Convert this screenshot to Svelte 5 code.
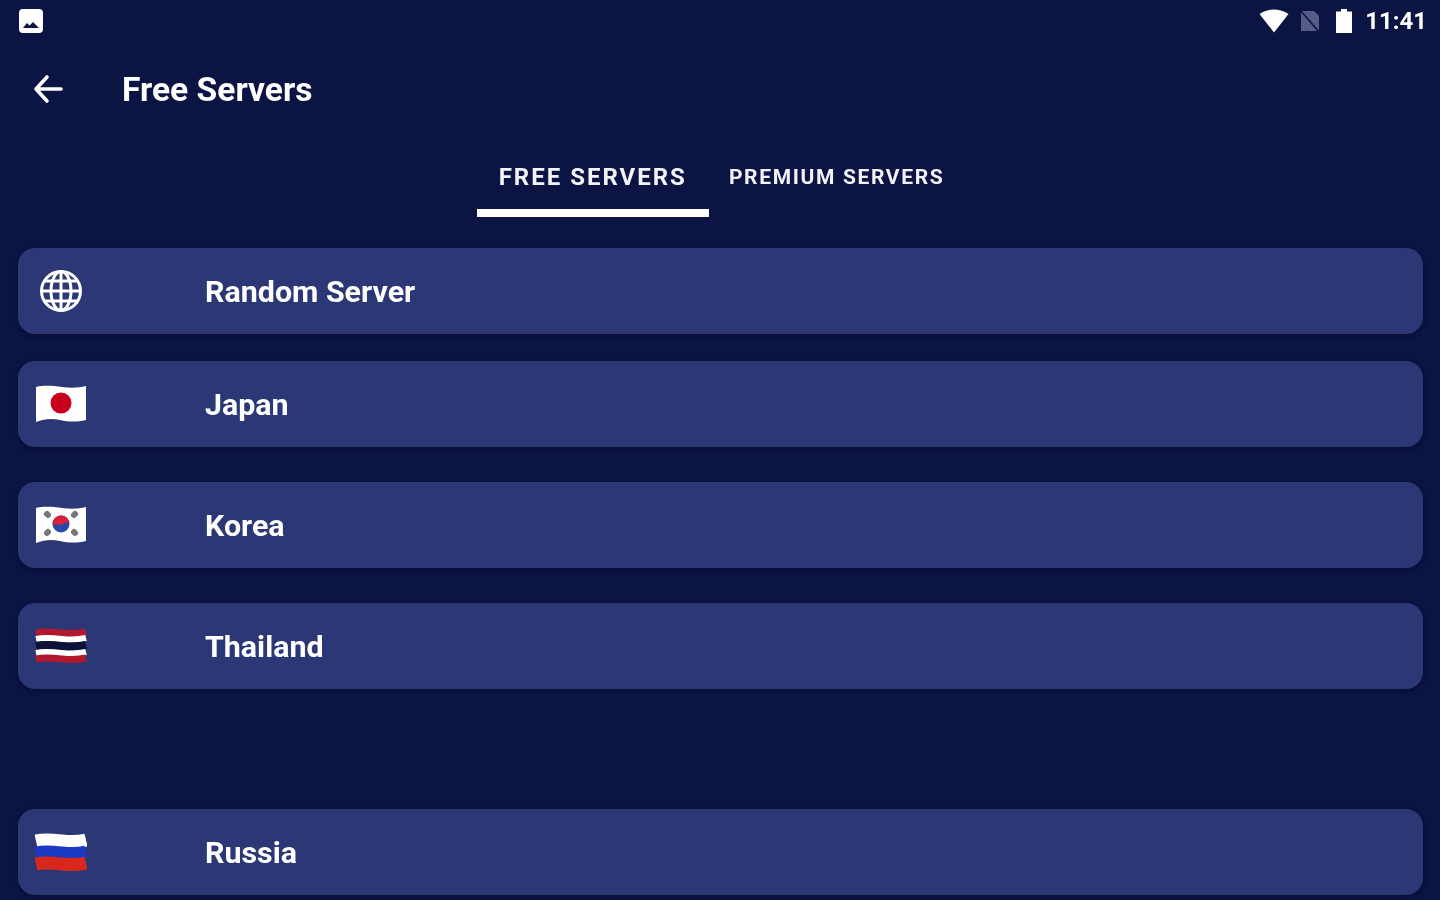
<script lang="ts">
  // Server picker screen: status bar, title bar, tabs and the list of servers
  interface Server {
    name: string;
    flag: string;
    gap: number;
  }

  const servers: Server[] = [
    { name: 'Random Server', flag: 'globe', gap: 0 },
    { name: 'Japan', flag: 'japan', gap: 27 },
    { name: 'Korea', flag: 'korea', gap: 35 },
    { name: 'Thailand', flag: 'thailand', gap: 35 },
    { name: 'Russia', flag: 'russia', gap: 120 },
  ];

  let activeTab = $state(0);
  const tabs = ['Free Servers', 'Premium Servers'];
</script>

<div class="screen">
  <div class="status-bar">
    <svg class="notif" width="26" height="26" viewBox="0 0 26 26">
      <rect x="1" y="1" width="24" height="24" rx="4" fill="#fff" />
      <path d="M5 20 L9 15 L11.5 17.5 L15 14 L21 20 Z" fill="#0b1442" />
    </svg>
    <div class="status-right">
      <svg width="30" height="24" viewBox="0 0 30 24">
        <path d="M0.5 5 C9 -1 21 -1 29.5 5 L15 23.5 Z" fill="#fff" />
      </svg>
      <svg class="sim" width="22" height="24" viewBox="0 0 22 24">
        <path d="M2 2 H15 L20 7 V22 H2 Z" fill="#565e88" />
        <path d="M1 1 L21 24" stroke="#0b1442" stroke-width="1.6" />
      </svg>
      <svg class="battery" width="18" height="26" viewBox="0 0 18 26">
        <path d="M6 1 H12 V3.5 H17 V25 H1 V3.5 H6 Z" fill="#fff" />
      </svg>
      <span class="time">11:41</span>
    </div>
  </div>

  <header class="title-bar">
    <svg width="32" height="32" viewBox="0 0 32 32" fill="none" stroke="#fff" stroke-width="3.6" stroke-linecap="round" stroke-linejoin="round">
      <path d="M29 16 H5 M15 4 L4 16 L15 28" />
    </svg>
    <h1>Free Servers</h1>
  </header>

  <nav class="tabs">
    {#each tabs as tab, i}
      <button class="tab" class:active={activeTab === i} onclick={() => (activeTab = i)}>{tab}</button>
    {/each}
  </nav>

  <ul class="servers">
    {#each servers as server}
      <li class="server" style:margin-top="{server.gap}px">
        <span class="icon">
          {#if server.flag === 'globe'}
            <svg width="44" height="44" viewBox="0 0 44 44" fill="none" stroke="#fff" stroke-width="3">
              <circle cx="22" cy="22" r="19.5" />
              <ellipse cx="22" cy="22" rx="10" ry="19.5" />
              <path d="M22 2.5 V41.5 M2.5 22 H41.5 M5.5 12 H38.5 M5.5 32 H38.5" />
            </svg>
          {:else if server.flag === 'japan'}
            <svg width="52" height="40" viewBox="0 0 52 40">
              <path d="M1 3 C10 1 18 2 27 3 S43 4 51 2 V36 C42 38 34 38 25 36 S9 35 1 38 Z" fill="#fff" />
              <circle cx="26" cy="19" r="10.5" fill="#c8001e" />
            </svg>
          {:else if server.flag === 'korea'}
            <svg width="52" height="40" viewBox="0 0 52 40">
              <path d="M1 3 C10 1 18 2 27 3 S43 4 51 2 V36 C42 38 34 38 25 36 S9 35 1 38 Z" fill="#fff" />
              <circle cx="26" cy="19" r="8.5" fill="#2748a8" />
              <path d="M17.5 19 A8.5 8.5 0 0 1 34.5 19 C30 15 28 21 24 20 S20 20 17.5 19 Z" fill="#d8203a" />
              <g stroke="#777" stroke-width="6" stroke-linecap="round">
                <path d="M12 9 L13 10 M40 9 L39 10 M12 28 L13 27 M40 28 L39 27" />
              </g>
            </svg>
          {:else if server.flag === 'thailand'}
            <svg width="52" height="36" viewBox="0 0 52 36" fill="none" stroke-width="7">
              <path d="M1 5 C10 3 18 4 27 5 S43 6 51 4" stroke="#b3192e" />
              <path d="M1 11 C10 9 18 10 27 11 S43 12 51 10" stroke="#fff" stroke-width="6" />
              <path d="M1 18 C10 16 18 17 27 18 S43 19 51 17" stroke="#0d1238" stroke-width="8" />
              <path d="M1 25 C10 23 18 24 27 25 S43 26 51 24" stroke="#fff" stroke-width="6" />
              <path d="M1 31 C10 29 18 30 27 31 S43 32 51 30" stroke="#b3192e" />
            </svg>
          {:else}
            <svg width="52" height="40" viewBox="0 0 52 40" fill="none" stroke-width="13">
              <path d="M1 9 C10 7 18 8 27 9 S43 10 51 8" stroke="#fff" />
              <path d="M1 21 C10 19 18 20 27 21 S43 22 51 20" stroke="#1c39c4" />
              <path d="M1 32 C10 30 18 31 27 32 S43 33 51 31" stroke="#d8281c" />
            </svg>
          {/if}
        </span>
        <span class="name">{server.name}</span>
      </li>
    {/each}
  </ul>
</div>

<style>
  :global(body) {
    margin: 0;
    background: #0b1442;
  }

  .screen {
    height: 900px;
    overflow: hidden;
    background: #0b1442;
    color: #fff;
    font-family: Roboto, 'Liberation Sans', sans-serif;
    filter: blur(0.7px);
  }

  .status-bar {
    display: flex;
    justify-content: space-between;
    align-items: center;
    height: 42px;
    padding: 0 13px 0 18px;
  }

  .status-right {
    display: flex;
    align-items: center;
  }

  .sim {
    margin-left: 10px;
  }

  .battery {
    margin-left: 14px;
  }

  .time {
    margin-left: 12px;
    font-size: 24px;
    font-weight: 700;
  }

  .title-bar {
    display: flex;
    align-items: center;
    height: 94px;
    padding-left: 32px;
  }

  h1 {
    margin: 0 0 0 58px;
    font-size: 33.6px;
    font-weight: 700;
  }

  .tabs {
    display: flex;
    justify-content: center;
    align-items: stretch;
    height: 81px;
    padding-left: 1px;
  }

  .tab {
    padding: 8px 20px 0;
    height: 81px;
    border: 0;
    border-bottom: 8px solid transparent;
    border-radius: 0;
    background: none;
    color: #f2f3f7;
    font-family: inherit;
    font-size: 21px;
    font-weight: 700;
    letter-spacing: 1.65px;
    text-transform: uppercase;
  }

  .tab.active {
    padding: 8px 22px 0;
    border-bottom-color: #fff;
    font-size: 24px;
    letter-spacing: 2px;
  }

  .servers {
    margin: 31px 17px 0 18px;
    padding: 0;
    list-style: none;
  }

  .server {
    display: flex;
    align-items: center;
    height: 86px;
    border-radius: 17px;
    background: #2b3875;
    box-shadow: 0 2px 4px rgba(5, 9, 40, 0.5);
  }

  .icon {
    display: flex;
    justify-content: center;
    width: 86px;
  }

  .name {
    margin-left: 101px;
    font-size: 30.4px;
    font-weight: 700;
  }
</style>
